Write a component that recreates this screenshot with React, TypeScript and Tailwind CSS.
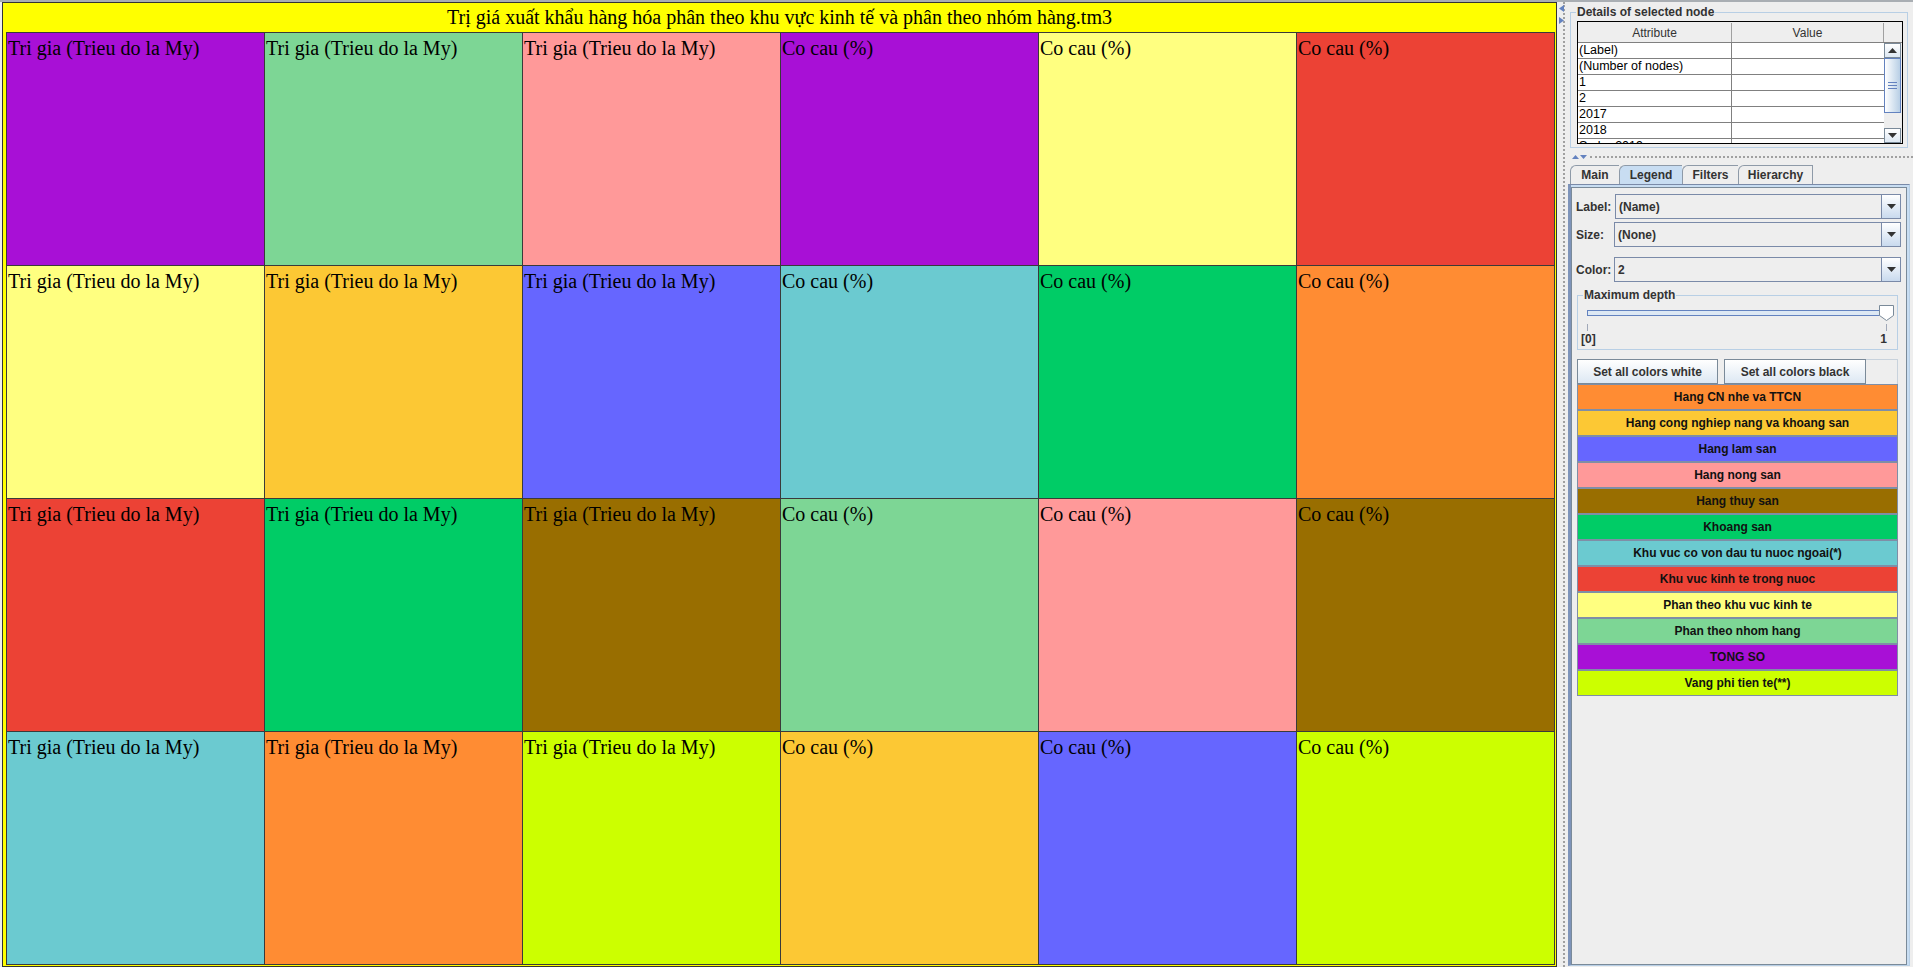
import React from "react";

const cellRows = [
  ["bg-[#a810d6]", "bg-[#7dd695]", "bg-[#ff9999]", "bg-[#a810d6]", "bg-[#ffff80]", "bg-[#ec4235]"],
  ["bg-[#ffff80]", "bg-[#fcc834]", "bg-[#6666ff]", "bg-[#6bcad0]", "bg-[#00cc66]", "bg-[#ff8c33]"],
  ["bg-[#ec4235]", "bg-[#00cc66]", "bg-[#996e00]", "bg-[#7dd695]", "bg-[#ff9999]", "bg-[#996e00]"],
  ["bg-[#6bcad0]", "bg-[#ff8c33]", "bg-[#ccff00]", "bg-[#fcc834]", "bg-[#6666ff]", "bg-[#ccff00]"],
];

const legend: [string, string][] = [
  ["Hang CN nhe va TTCN", "bg-[#ff8c33]"],
  ["Hang cong nghiep nang va khoang san", "bg-[#fcc834]"],
  ["Hang lam san", "bg-[#6666ff]"],
  ["Hang nong san", "bg-[#ff9999]"],
  ["Hang thuy san", "bg-[#996e00]"],
  ["Khoang san", "bg-[#00cc66]"],
  ["Khu vuc co von dau tu nuoc ngoai(*)", "bg-[#6bcad0]"],
  ["Khu vuc kinh te trong nuoc", "bg-[#ec4235]"],
  ["Phan theo khu vuc kinh te", "bg-[#ffff80]"],
  ["Phan theo nhom hang", "bg-[#7dd695]"],
  ["TONG SO", "bg-[#a810d6]"],
  ["Vang phi tien te(**)", "bg-[#ccff00]"],
];

const attrs = ["(Label)", "(Number of nodes)", "1", "2", "2017", "2018", "So bo 2019"];

function Combo({ value, className }: { value: string; className: string }) {
  return (
    <div className={`flex h-[25px] border border-[#7a8aa8] bg-[#eeeeee] ${className}`}>
      <div className="flex flex-1 items-center pl-[3px] text-[12px] font-bold text-[#333]">
        {value}
      </div>
      <div className="flex w-[19px] items-center justify-center border-l border-[#7a8aa8] bg-linear-to-b from-white to-[#c9daee]">
        <svg width="9" height="5" viewBox="0 0 9 5">
          <path d="M0 0h9L4.5 5z" fill="#333" />
        </svg>
      </div>
    </div>
  );
}

function ScrollBtn({ up }: { up?: boolean }) {
  return (
    <div className="flex h-[15px] items-center justify-center border border-[#7a8a99] bg-linear-to-b from-white to-[#dde8f3]">
      <svg width="9" height="5" viewBox="0 0 9 5">
        <path d={up ? "M0 5h9L4.5 0z" : "M0 0h9L4.5 5z"} fill="#333" />
      </svg>
    </div>
  );
}

export default function App() {
  return (
    <div className="flex h-[967px] w-[1913px] flex-col overflow-hidden bg-[#eeeeee] font-['Liberation_Sans',Arial,sans-serif]">
      <div className="h-[2px] bg-[#a9aeb3]" />
      <div className="flex flex-1">
        {/* treemap */}
        <div className="w-[1557px] pl-[2px]">
          <div className="h-[965px] border border-[#333] bg-[#ffff00] font-['Liberation_Serif',serif] text-[20px] text-black">
            <div className="h-[29px] text-center leading-[29px]">
              Trị giá xuất khẩu hàng hóa phân theo khu vực kinh tế và phân theo nhóm hàng.tm3
            </div>
            <div className="ml-[3px] grid w-[1549px] grid-cols-[repeat(6,258px)] grid-rows-[repeat(4,233px)] border-r border-b border-[#3a3a3a]">
              {cellRows.map((row, r) =>
                row.map((bg, c) => (
                  <div
                    key={`${r}-${c}`}
                    className={`border-l border-t border-[#3a3a3a] pl-[1px] pt-[5px] leading-[20px] ${bg}`}
                  >
                    {c < 3 ? "Tri gia (Trieu do la My)" : "Co cau (%)"}
                  </div>
                ))
              )}
            </div>
          </div>
        </div>

        {/* splitter */}
        <div className="relative w-[9px]">
          <svg className="absolute left-[2px] top-[3px]" width="5" height="20" viewBox="0 0 5 20">
            <path d="M5 0v7L0 3.5z" fill="#6382bf" />
            <path d="M0 12v7l5-3.5z" fill="#6382bf" />
          </svg>
          <div className="ml-[6px] h-full border-l-2 border-dotted border-[#a0a0a0]" />
        </div>

        {/* right panel */}
        <div className="flex w-[347px] flex-col">
          <fieldset className="mt-[3px] ml-[4px] h-[143px] w-[338px] border border-[#b8cfe5] px-0 pb-[3px]">
            <legend className="ml-[5px] px-[1px] text-[12px] font-bold leading-[14px] text-[#333]">
              Details of selected node
            </legend>
            <div className="mt-[2px] ml-[6px] flex h-[123px] w-[326px] border border-black bg-white">
              <div className="flex w-[306px] flex-col">
                <div className="flex h-[21px] border-b border-[#808080] bg-[#eeeeee] pt-[1px] text-[12px] text-[#333]">
                  <div className="flex w-[154px] items-center justify-center border-r border-[#a0a0a0]">Attribute</div>
                  <div className="flex w-[152px] items-center justify-center border-r border-[#a0a0a0]">Value</div>
                </div>
                <div className="flex-1 overflow-hidden">
                  {attrs.map((a) => (
                    <div key={a} className="flex h-[16px] border-b border-[#808080] text-[12.5px] leading-[15px] text-black">
                      <div className="w-[154px] overflow-hidden border-r border-[#808080] pl-[1px]">{a}</div>
                      <div className="flex-1" />
                    </div>
                  ))}
                </div>
              </div>
              <div className="flex w-[18px] flex-col">
                <div className="h-[21px] border-b border-[#808080] bg-[#eeeeee]" />
                <div className="flex flex-1 flex-col bg-[#eeeeee] pr-[1px]">
                  <ScrollBtn up />
                  <div className="flex h-[55px] flex-col items-center justify-center gap-[2px] border border-[#6382bf] bg-linear-to-r from-white to-[#b8cfe5]">
                    <div className="h-px w-[9px] bg-[#6382bf]" />
                    <div className="h-px w-[9px] bg-[#6382bf]" />
                    <div className="h-px w-[9px] bg-[#6382bf]" />
                  </div>
                  <div className="flex-1" />
                  <ScrollBtn />
                </div>
              </div>
            </div>
          </fieldset>

          {/* horizontal divider */}
          <div className="flex h-[17px] items-center pl-[6px]">
            <svg width="16" height="6" viewBox="0 0 16 6">
              <path d="M0 5h7L3.5 1z" fill="#6382bf" />
              <path d="M8 1h7L11.5 5z" fill="#6382bf" />
            </svg>
            <div className="ml-[2px] h-0 flex-1 border-t-2 border-dotted border-[#a0a0a0]" />
          </div>

          {/* tabs */}
          <div className="flex h-[19px] pl-[4px] text-[12px] font-bold text-[#333]">
            <div className="flex w-[49px] items-center justify-center rounded-tl-[6px] border-t border-l border-[#8e9aa8] bg-[#eeeeee]">Main</div>
            <div className="flex w-[63px] items-center justify-center rounded-tl-[6px] border-t border-l border-[#8e9aa8] bg-[#c8ddf2]">Legend</div>
            <div className="flex w-[56px] items-center justify-center rounded-tl-[6px] border-t border-l border-[#8e9aa8] bg-[#eeeeee]">Filters</div>
            <div className="flex w-[75px] items-center justify-center rounded-tl-[6px] border-t border-l border-r border-[#8e9aa8] bg-[#eeeeee]">Hierarchy</div>
          </div>

          {/* tab content */}
          <div className="ml-[2px] h-[782px] w-[342px] border-t border-l-[3px] border-r border-b border-t-[#7a8aa8] border-l-[#7d93b9] border-r-[#b8cfe5] border-b-[#b8cfe5] bg-[#c8ddf2] pt-[2px]">
            <div className="flex h-[778px] w-[336px] flex-col border border-[#7a8a99] bg-[#eeeeee] pl-[4px]">
              <div className="mt-[6px] flex items-center">
                <div className="w-[39px] text-[12px] font-bold text-[#333]">Label:</div>
                <Combo value="(Name)" className="w-[286px]" />
              </div>
              <div className="mt-[3px] flex items-center">
                <div className="w-[38px] text-[12px] font-bold text-[#333]">Size:</div>
                <Combo value="(None)" className="w-[287px]" />
              </div>
              <div className="mt-[10px] flex items-center">
                <div className="w-[38px] text-[12px] font-bold text-[#333]">Color:</div>
                <Combo value="2" className="w-[287px]" />
              </div>

              <fieldset className="mt-[6px] ml-[1px] h-[62px] w-[321px] border border-[#b8cfe5]">
                <legend className="ml-[5px] px-[1px] text-[12px] font-bold leading-[14px] text-[#333]">
                  Maximum depth
                </legend>
                <svg className="mt-[3px] ml-[9px] block" width="309" height="27" viewBox="0 0 309 27">
                  <rect x="0.5" y="5.5" width="299" height="5" fill="#dde8f3" stroke="#6382bf" />
                  <path d="M0.5 19v7M299.5 19v7" stroke="#a0a8b8" />
                  <path d="M292.5 0.5h14v10l-7 5l-7-5z" fill="#ffffff" stroke="#7a8a99" />
                </svg>
                <div className="flex justify-between pl-[3px] pr-[10px] text-[12px] font-bold leading-[14px] text-[#333]">
                  <span>[0]</span>
                  <span>1</span>
                </div>
              </fieldset>

              <div className="mt-[9px] ml-[1px] flex w-[321px] gap-[6px] text-[12px] font-bold text-[#333]">
                <div className="flex h-[25px] w-[141px] items-center justify-center border border-[#7a8a99] bg-linear-to-b from-white to-[#dde8f3]">
                  Set all colors white
                </div>
                <div className="flex h-[25px] w-[142px] items-center justify-center border border-[#7a8a99] bg-linear-to-b from-white to-[#dde8f3]">
                  Set all colors black
                </div>
                <div className="-ml-[6px] flex-1 border-t border-r border-[#c8d2dc]" />
              </div>
              <div className="ml-[1px] flex w-[321px] flex-col">
                {legend.map(([name, bg]) => (
                  <div
                    key={name}
                    className={`flex h-[26px] items-center justify-center border border-[#7f8ea6] text-[12px] font-bold text-[#111] ${bg}`}
                  >
                    {name}
                  </div>
                ))}
              </div>
            </div>
          </div>
        </div>
      </div>
    </div>
  );
}
